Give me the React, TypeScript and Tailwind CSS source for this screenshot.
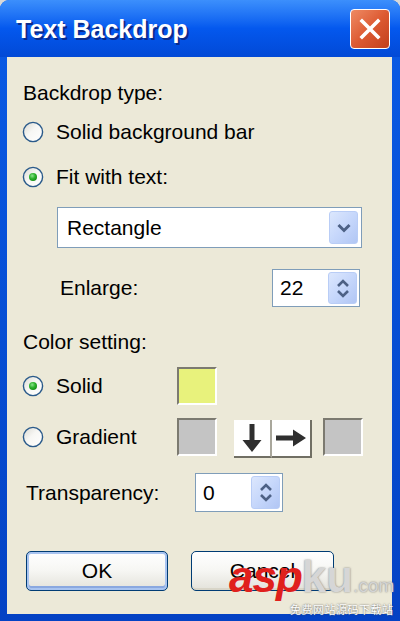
import React from "react";

const font = "font-['Liberation_Sans',Arial,sans-serif]";

const Radio = ({ checked }: { checked?: boolean }) => (
  <svg width="22" height="22" viewBox="0 0 22 22" className="shrink-0">
    <defs>
      <linearGradient id={checked ? "rf1" : "rf0"} x1="0" y1="0" x2="1" y2="1">
        <stop offset="0" stopColor="#d9d8d0" />
        <stop offset="0.45" stopColor="#f7f7f4" />
        <stop offset="1" stopColor="#ffffff" />
      </linearGradient>
      <radialGradient id="dot" cx="0.4" cy="0.35" r="0.7">
        <stop offset="0" stopColor="#8ee28e" />
        <stop offset="0.5" stopColor="#2fb42f" />
        <stop offset="1" stopColor="#138a13" />
      </radialGradient>
    </defs>
    <circle cx="11" cy="11" r="9.6" fill={`url(#${checked ? "rf1" : "rf0"})`} stroke="#2a5a8a" strokeWidth="1.4" />
    {checked && <circle cx="11" cy="11" r="4" fill="url(#dot)" />}
  </svg>
);

const BlueBtn = ({ children, className }: { children: React.ReactNode; className: string }) => (
  <div
    className={`flex items-center justify-center rounded-[3px] border border-[#b9cdf6] bg-gradient-to-br from-[#dce7fd] via-[#c6d7fb] to-[#b1c6f4] ${className}`}
  >
    {children}
  </div>
);

const Spinner = ({ value, className }: { value: string; className: string }) => (
  <div className={`flex items-center border border-[#7f9db9] bg-white p-[2px] ${className}`}>
    <span className="flex-1 pl-[5px] text-[21px] text-black">{value}</span>
    <BlueBtn className="h-full w-[29px] flex-col gap-[3px]">
      <svg width="14" height="8" viewBox="0 0 14 8">
        <path d="M2 7 L7 2 L12 7" stroke="#4d6185" strokeWidth="2.6" fill="none" />
      </svg>
      <svg width="14" height="8" viewBox="0 0 14 8">
        <path d="M2 1 L7 6 L12 1" stroke="#4d6185" strokeWidth="2.6" fill="none" />
      </svg>
    </BlueBtn>
  </div>
);

const Swatch = ({ color }: { color: string }) => (
  <div className="h-[38px] w-[40px] border-[2px] border-t-[#7c7a70] border-l-[#7c7a70] border-b-white border-r-white">
    <div className="h-full w-full" style={{ background: color }} />
  </div>
);

const XpButton = ({ label, focused }: { label: string; focused?: boolean }) => (
  <div
    className={`flex h-[40px] items-center justify-center rounded-[5px] border border-[#003c74] bg-gradient-to-b from-white via-[#f6f6f3] to-[#e3e2da] text-[21px] text-black ${
      focused ? "shadow-[inset_0_0_0_2px_#a9c4f0,inset_0_-2px_0_2px_#8aa8e0]" : "shadow-[inset_0_-2px_0_#d8d5c8]"
    }`}
  >
    {label}
  </div>
);

export default function App() {
  return (
    <div className={`relative h-[621px] w-[400px] overflow-hidden bg-[#d8d8d8] ${font}`}>
      <div className="flex h-full flex-col rounded-t-[9px] bg-gradient-to-b from-[#0a5be6] to-[#0442c4]">
        {/* title bar */}
        <div className="flex h-[57px] shrink-0 items-center justify-between rounded-t-[9px] bg-gradient-to-b from-[#3c8ffc] via-[#0458ee] to-[#0249d6] pl-[16px] pr-[10px]">
          <span className="pt-[2px] text-[25px] font-bold text-white [text-shadow:2px_2px_0_#0a2a8c]">
            Text Backdrop
          </span>
          <div className="flex h-[40px] w-[40px] items-center justify-center rounded-[4px] border-[1.5px] border-white bg-gradient-to-br from-[#ee8a63] via-[#dd5a32] to-[#c2401b]">
            <svg width="24" height="24" viewBox="0 0 24 24">
              <path d="M4 4 L20 20 M20 4 L4 20" stroke="white" strokeWidth="3.6" strokeLinecap="square" />
            </svg>
          </div>
        </div>

        {/* client area */}
        <div className="mb-[7px] ml-[7px] mr-[8px] flex flex-1 flex-col bg-[#ece9d8] text-[21px] text-black">
          <div className="mt-[24px] flex h-[24px] items-center pl-[16px]">Backdrop type:</div>

          <div className="mt-[15px] flex h-[24px] items-center gap-[12px] pl-[15px]">
            <Radio />
            <span>Solid background bar</span>
          </div>

          <div className="mt-[21px] flex h-[24px] items-center gap-[12px] pl-[15px]">
            <Radio checked />
            <span>Fit with text:</span>
          </div>

          <div className="ml-[50px] mt-[18px] flex h-[41px] w-[305px] items-center border border-[#7f9db9] bg-white p-[3px]">
            <span className="flex-1 pl-[6px]">Rectangle</span>
            <BlueBtn className="h-full w-[29px]">
              <svg width="16" height="10" viewBox="0 0 16 10">
                <path d="M2.5 2 L8 7.5 L13.5 2" stroke="#4d6185" strokeWidth="3" fill="none" />
              </svg>
            </BlueBtn>
          </div>

          <div className="mt-[21px] flex h-[38px] items-center">
            <span className="w-[265px] pl-[53px]">Enlarge:</span>
            <Spinner value="22" className="h-[38px] w-[88px]" />
          </div>

          <div className="mt-[23px] flex h-[24px] items-center pl-[16px]">Color setting:</div>

          <div className="mt-[13px] flex h-[38px] items-center">
            <div className="flex w-[170px] items-center gap-[12px] pl-[15px]">
              <Radio checked />
              <span>Solid</span>
            </div>
            <Swatch color="#e8f27c" />
          </div>

          <div className="mt-[13px] flex h-[40px] items-start">
            <div className="flex h-[38px] w-[170px] items-center gap-[12px] pl-[15px]">
              <Radio />
              <span>Gradient</span>
            </div>
            <Swatch color="#c4c4c4" />
            <div className="ml-[17px] mt-[2px] flex h-[38px]">
              <div className="flex h-full w-[38px] items-center justify-center border-b-[2px] border-r-[2px] border-b-[#716f64] border-r-[#a9a79c] bg-white">
                <svg width="22" height="30" viewBox="0 0 22 30">
                  <path d="M8.5 1 H13.5 V17 H20.5 L11 29 L1.5 17 H8.5 Z" fill="#2f2f2f" />
                </svg>
              </div>
              <div className="flex h-full w-[40px] items-center justify-center border-b-[2px] border-r-[2px] border-b-[#716f64] border-r-[#716f64] bg-white">
                <svg width="32" height="18" viewBox="0 0 32 18">
                  <path d="M1 6.5 H18 V0.5 L31 9 L18 17.5 V11.5 H1 Z" fill="#2f2f2f" />
                </svg>
              </div>
            </div>
            <div className="ml-[11px]">
              <Swatch color="#c4c4c4" />
            </div>
          </div>

          <div className="mt-[15px] flex h-[39px] items-center">
            <span className="w-[188px] pl-[19px]">Transparency:</span>
            <Spinner value="0" className="h-[39px] w-[88px]" />
          </div>

          <div className="mt-[39px] flex items-center gap-[23px] pl-[19px]">
            <div className="w-[142px]">
              <XpButton label="OK" focused />
            </div>
            <div className="w-[143px]">
              <XpButton label="Cancel" />
            </div>
          </div>
        </div>
      </div>

      {/* watermark */}
      <div className="absolute left-[229px] top-[555px] flex items-baseline">
        <span className="text-[44px] font-bold italic leading-none tracking-[-1px] text-[#e0201c]">asp</span>
        <span className="text-[44px] font-bold leading-none text-[#d6d6d6] [text-shadow:0_0_2px_#777]">ku</span>
        <span className="text-[19px] leading-none text-[#d4d4d4] [text-shadow:0_0_2px_#777]">.com</span>
      </div>
      <div className="absolute left-[290px] top-[604px] font-['Noto_Sans_CJK_SC',sans-serif] text-[11px] leading-none tracking-[0.5px] text-white [text-shadow:0_0_2px_#444]">
        免费网站源码下载站
      </div>
    </div>
  );
}
